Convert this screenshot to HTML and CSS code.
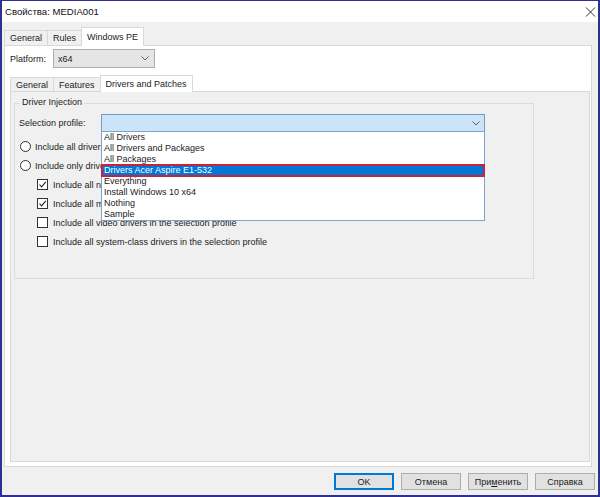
FILE: index.html
```html
<!DOCTYPE html>
<html>
<head>
<meta charset="utf-8">
<link rel="stylesheet" href="styles.css">
</head>
<body>
<div class="window">
  <div class="titlebar">
    <span class="title">Свойства: MEDIA001</span>
    <svg class="close" width="11" height="10" viewBox="0 0 11 10"><path d="M1 0.5L10 9.5M10 0.5L1 9.5" stroke="#333" stroke-width="1" fill="none"/></svg>
  </div>
  <div class="body">
    <div class="tabs outer-tabs">
      <div class="tab">General</div>
      <div class="tab">Rules</div>
      <div class="tab active">Windows PE</div>
    </div>
    <div class="outer-pane">
      <div class="platform-row">
        <span class="platform-label">Platform:</span>
        <div class="combo gray-combo">
          <span>x64</span>
          <svg width="8" height="5" viewBox="0 0 8 5"><path d="M0.5 0.5L4 4L7.5 0.5" stroke="#606060" fill="none"/></svg>
        </div>
      </div>
      <div class="tabs inner-tabs">
        <div class="tab">General</div>
        <div class="tab">Features</div>
        <div class="tab active">Drivers and Patches</div>
      </div>
      <div class="inner-pane">
        <div class="group">
          <div class="group-title">Driver Injection</div>
          <div class="profile-row">
            <span class="profile-label">Selection profile:</span>
            <div class="combo-wrap">
              <div class="combo blue-combo">
                <span></span>
                <svg width="8" height="5" viewBox="0 0 8 5"><path d="M0.5 0.5L4 4L7.5 0.5" stroke="#606060" fill="none"/></svg>
              </div>
              <ul class="dropdown">
                <li>All Drivers</li>
                <li>All Drivers and Packages</li>
                <li>All Packages</li>
                <li class="selected">Drivers Acer Aspire E1-532</li>
                <li>Everything</li>
                <li>Install Windows 10 x64</li>
                <li>Nothing</li>
                <li>Sample</li>
              </ul>
            </div>
          </div>
          <div class="option first">
            <span class="radio"></span>
            <span>Include all drivers from the selection profile</span>
          </div>
          <div class="option">
            <span class="radio"></span>
            <span>Include only drivers of the following types:</span>
          </div>
          <div class="option sub">
            <span class="check"><svg width="9" height="9" viewBox="0 0 9 9"><path d="M1.5 4.5L3.6 6.8L7.8 1.8" stroke="#222" stroke-width="1.1" fill="none"/></svg></span>
            <span>Include all network drivers in the selection profile</span>
          </div>
          <div class="option sub">
            <span class="check"><svg width="9" height="9" viewBox="0 0 9 9"><path d="M1.5 4.5L3.6 6.8L7.8 1.8" stroke="#222" stroke-width="1.1" fill="none"/></svg></span>
            <span>Include all mass storage drivers in the selection profile</span>
          </div>
          <div class="option sub">
            <span class="check"></span>
            <span>Include all video drivers in the selection profile</span>
          </div>
          <div class="option sub">
            <span class="check"></span>
            <span>Include all system-class drivers in the selection profile</span>
          </div>
        </div>
      </div>
    </div>
    <div class="buttons">
      <div class="btn default">OK</div>
      <div class="btn">Отмена</div>
      <div class="btn">При<u>м</u>енить</div>
      <div class="btn">Справка</div>
    </div>
  </div>
</div>
</body>
</html>
```
FILE: styles.css
```css
* { box-sizing: border-box; }
body {
  margin: 0;
  font-family: "Liberation Sans", Arial, sans-serif;
  font-size: 9px;
  color: #1b1b1b;
}
.window {
  width: 600px;
  height: 497px;
  border: solid #2e3192;
  border-width: 1px 2px 2px 2px;
  display: flex;
  flex-direction: column;
  background: #f0f0f0;
}
.titlebar {
  height: 21px;
  flex: none;
  background: #fff;
  display: flex;
  align-items: center;
  justify-content: space-between;
  padding: 0 2px 0 3px;
}
.title { font-size: 9.6px; color: #111; }
.body {
  flex: 1;
  display: flex;
  flex-direction: column;
  padding: 0 6px 0 2px;
}
.tabs {
  display: flex;
  align-items: flex-end;
  flex: none;
}
.tab {
  height: 15px;
  padding: 0 5px;
  border: 1px solid #d9d9d9;
  border-bottom: none;
  margin-left: -1px;
  background: #f0f0f0;
  display: flex;
  align-items: center;
  white-space: nowrap;
}
.tab:first-child { margin-left: 0; }
.tab.active {
  height: 19px;
  background: #fff;
  margin-bottom: -1px;
  position: relative;
  z-index: 1;
}
.outer-tabs { height: 18px; margin-top: 5px; }
.outer-pane {
  height: 422px;
  flex: none;
  border: 1px solid #d9d9d9;
  background: #fff;
  display: flex;
  flex-direction: column;
}
.platform-row {
  display: flex;
  align-items: center;
  margin-top: 3px;
  padding-left: 5px;
  height: 19px;
  flex: none;
}
.platform-label { width: 43px; }
.combo {
  display: flex;
  align-items: center;
  justify-content: space-between;
}
.gray-combo {
  width: 102px;
  height: 19px;
  background: #e5e5e5;
  border: 1px solid #adadad;
  padding: 0 5px 0 4px;
}
.inner-tabs { height: 16px; margin-top: 7px; margin-left: 5px; }
.inner-tabs .tab { height: 14px; }
.inner-tabs .tab.active { height: 17px; }
.inner-pane {
  height: 371px;
  flex: none;
  margin: 0 1px 4px 5px;
  border: 1px solid #d9d9d9;
  background: #f0f0f0;
  padding-left: 3px;
}
.group {
  width: 520px;
  height: 176px;
  margin-top: 11px;
  border: 1px solid #dcdcdc;
}
.group-title {
  margin: -7px 0 0 5px;
  padding: 0 2px;
  width: fit-content;
  line-height: 11px;
  background: #f0f0f0;
}
.profile-row {
  display: flex;
  align-items: center;
  margin-top: 6px;
  padding-left: 4px;
  height: 18px;
}
.profile-label { width: 82px; flex: none; }
.combo-wrap {
  position: relative;
  width: 384px;
  height: 18px;
}
.blue-combo {
  height: 18px;
  background: #cce4f7;
  border: 1px solid #6f9ccb;
  padding: 0 4px;
}
.dropdown {
  position: absolute;
  top: 17px;
  left: 0;
  width: 384px;
  margin: 0;
  padding: 0;
  list-style: none;
  background: #fff;
  border: 1px solid #7ea4cb;
  z-index: 5;
}
.dropdown li {
  height: 11px;
  line-height: 11px;
  padding-left: 2px;
  white-space: nowrap;
}
.dropdown li.selected {
  background: #0078d7;
  color: #fff;
  outline: 2px solid #c8233b;
  outline-offset: -1px;
}
.option {
  display: flex;
  align-items: center;
  height: 19px;
  padding-left: 5px;
  gap: 4px;
  white-space: nowrap;
}
.option.first { margin-top: 5px; }
.option.sub { padding-left: 22px; gap: 5px; }
.radio {
  width: 11px;
  height: 11px;
  border: 1px solid #333;
  border-radius: 50%;
  background: #fff;
  flex: none;
}
.check {
  width: 11px;
  height: 11px;
  border: 1px solid #333;
  background: #fff;
  flex: none;
  display: flex;
  align-items: center;
  justify-content: center;
}
.buttons {
  display: flex;
  justify-content: flex-end;
  gap: 7px;
  margin: 6px -3px 0 0;
  height: 17px;
  flex: none;
}
.btn {
  width: 60px;
  height: 17px;
  background: #e1e1e1;
  border: 1px solid #adadad;
  display: flex;
  align-items: center;
  justify-content: center;
}
.btn.default {
  border-color: #0078d7;
  box-shadow: inset 0 0 0 1px #0078d7;
}
```
